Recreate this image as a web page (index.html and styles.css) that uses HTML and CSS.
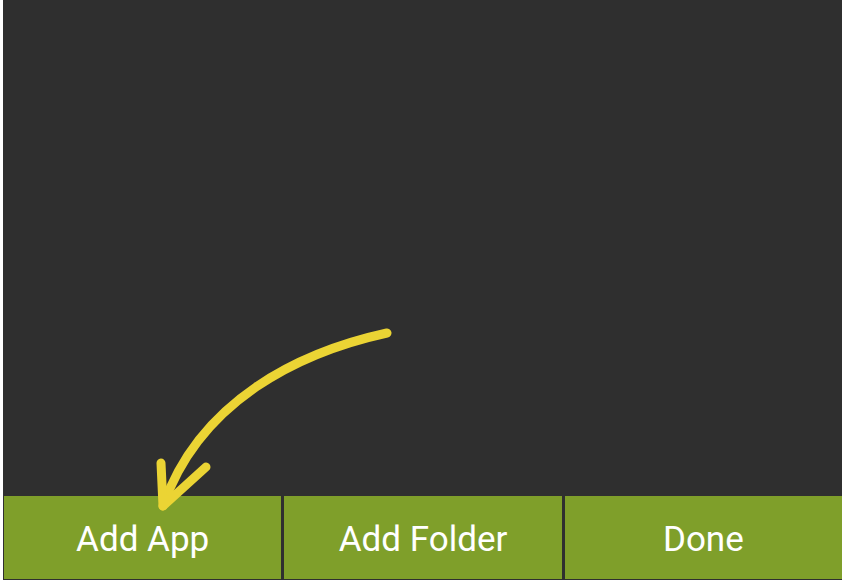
FILE: index.html
```html
<!DOCTYPE html>
<html lang="en">
<head>
    <meta name="viewport" content="width=device-width, initial-scale=1.0" charset="UTF-8">
    <title>Edit Home</title>
    <link rel="stylesheet" href="styles.css">
</head>
<body>

<div class="screen">
    <div class="workspace"></div>

    <div class="actions">
        <button class="action">Add App</button>
        <button class="action">Add Folder</button>
        <button class="action">Done</button>
    </div>

    <svg class="hint-arrow" width="839" height="580" viewBox="3 0 839 580">
        <path d="M387 333 C300 352 200 400 163 506" />
        <path d="M161 463 L163 506 L206 467" />
    </svg>
</div>

</body>
</html>
```
FILE: styles.css
```css
body {
    margin: 0;
    background: #fff;
    font-family: Roboto, 'Open Sans', sans-serif;
}

.screen {
    position: relative;
    margin-left: 3px;
    width: 839px;
    height: 580px;
    background-color: #2f2f2f;
    display: flex;
    flex-direction: column;
    overflow: hidden;
}

.workspace {
    flex: 1;
}

.actions {
    display: flex;
    gap: 3px;
    height: 83px;
    padding: 0 0 1px 1px;
}

.action {
    flex: 1;
    border: none;
    margin: 0;
    padding: 4px 0 0 0;
    background-color: #7f9f2a;
    color: #fff;
    font-family: Roboto, sans-serif;
    font-size: 35px;
}

.hint-arrow {
    position: absolute;
    left: 0;
    top: 0;
    pointer-events: none;
}

.hint-arrow path {
    fill: none;
    stroke: #ebd434;
    stroke-width: 9;
    stroke-linecap: round;
    stroke-linejoin: round;
}
```
